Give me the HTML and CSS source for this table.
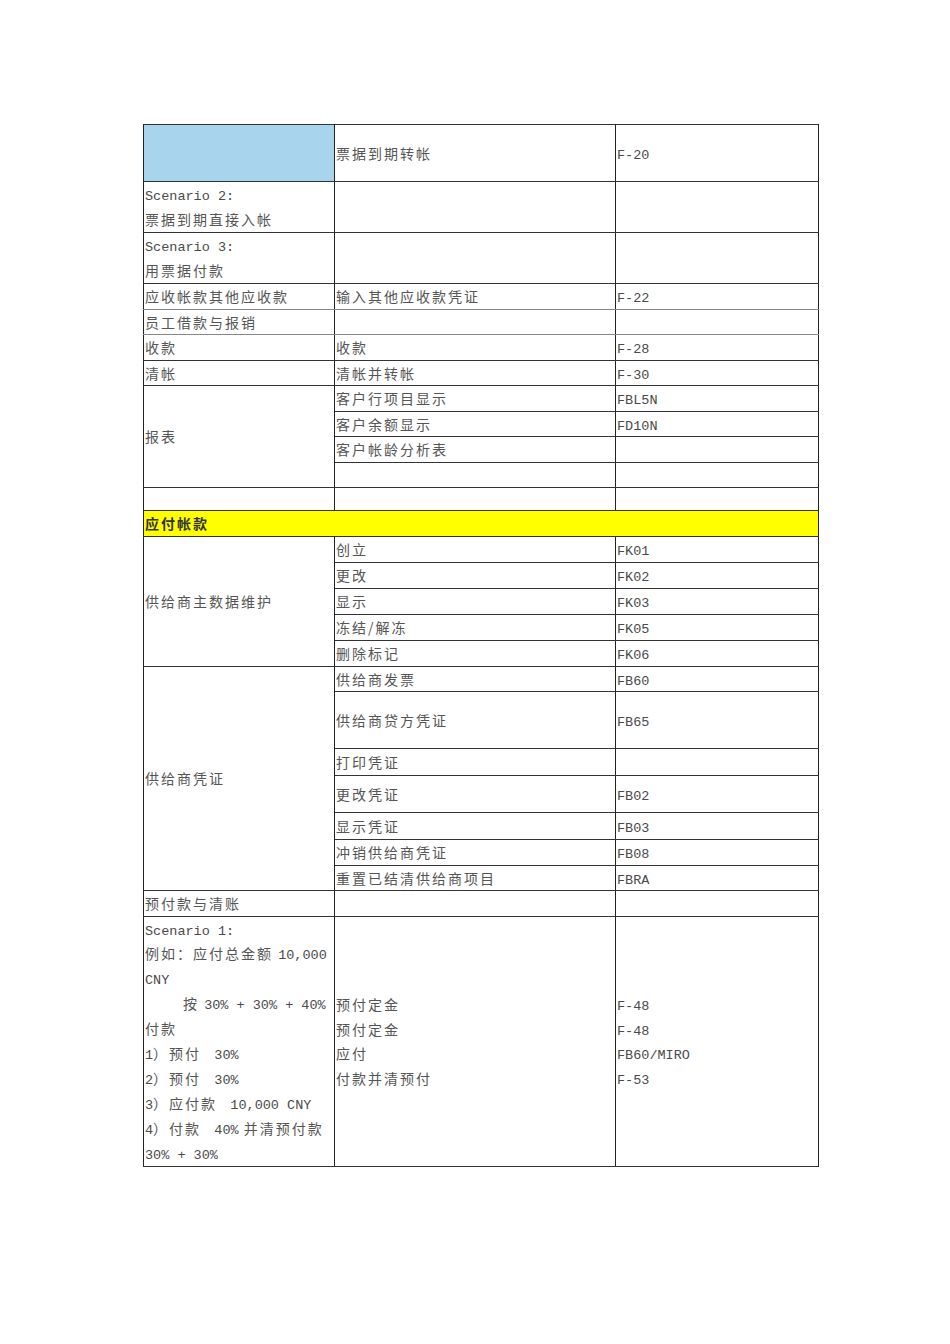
FILE: index.html
```html
<!DOCTYPE html>
<html lang="zh-CN">
<head>
<meta charset="utf-8">
<title>SAP FI 事务代码</title>
<link rel="stylesheet" href="styles.css">
</head>
<body>
<div class="page">
<table class="sheet">
<colgroup>
<col class="c1"><col class="c2"><col class="c3">
</colgroup>
<tbody>
<tr class="h58"><td class="blue"></td><td>票据到期转帐</td><td><span class="en">F-20</span></td></tr>
<tr class="two"><td><span class="en">Scenario 2:</span><br>票据到期直接入帐</td><td></td><td></td></tr>
<tr class="two"><td><span class="en">Scenario 3:</span><br>用票据付款</td><td></td><td></td></tr>
<tr class="gray"><td>应收帐款其他应收款</td><td>输入其他应收款凭证</td><td><span class="en">F-22</span></td></tr>
<tr class="gray"><td>员工借款与报销</td><td></td><td></td></tr>
<tr><td>收款</td><td>收款</td><td><span class="en">F-28</span></td></tr>
<tr><td>清帐</td><td>清帐并转帐</td><td><span class="en">F-30</span></td></tr>
<tr><td rowspan="4">报表</td><td>客户行项目显示</td><td><span class="en">FBL5N</span></td></tr>
<tr><td>客户余额显示</td><td><span class="en">FD10N</span></td></tr>
<tr><td>客户帐龄分析表</td><td></td></tr>
<tr><td></td><td></td></tr>
<tr class="h23"><td></td><td></td><td></td></tr>
<tr><td class="yellow" colspan="3"><strong>应付帐款</strong></td></tr>
<tr class="h26"><td rowspan="5">供给商主数据维护</td><td>创立</td><td><span class="en">FK01</span></td></tr>
<tr class="h26"><td>更改</td><td><span class="en">FK02</span></td></tr>
<tr class="h26"><td>显示</td><td><span class="en">FK03</span></td></tr>
<tr class="h26"><td>冻结/解冻</td><td><span class="en">FK05</span></td></tr>
<tr class="h26"><td>删除标记</td><td><span class="en">FK06</span></td></tr>
<tr><td rowspan="7">供给商凭证</td><td>供给商发票</td><td><span class="en">FB60</span></td></tr>
<tr class="h57"><td>供给商贷方凭证</td><td><span class="en">FB65</span></td></tr>
<tr class="h27"><td>打印凭证</td><td></td></tr>
<tr class="h37"><td>更改凭证</td><td><span class="en">FB02</span></td></tr>
<tr class="h27"><td>显示凭证</td><td><span class="en">FB03</span></td></tr>
<tr><td>冲销供给商凭证</td><td><span class="en">FB08</span></td></tr>
<tr><td>重置已结清供给商项目</td><td><span class="en">FBRA</span></td></tr>
<tr><td>预付款与清账</td><td></td><td></td></tr>
<tr><td class="multi"><span class="en">Scenario 1:</span><br>例如：应付总金额 <span class="en">10,000</span><br><span class="en">CNY</span><br><span class="indent">按</span> <span class="en">30% + 30% + 40%</span><br>付款<br><span class="en">1</span>）预付 <span class="en">&nbsp;30%</span><br><span class="en">2</span>）预付 <span class="en">&nbsp;30%</span><br><span class="en">3</span>）应付款 <span class="en">&nbsp;10,000 CNY</span><br><span class="en">4</span>）付款 <span class="en">&nbsp;40%</span> 并清预付款<br><span class="en">30% + 30%</span></td><td>预付定金<br>预付定金<br>应付<br>付款并清预付</td><td><span class="en">F-48</span><br><span class="en">F-48</span><br><span class="en">FB60/MIRO</span><br><span class="en">F-53</span></td></tr>
</tbody>
</table>
</div>
</body>
</html>
```

FILE: styles.css
```css
html, body {
  margin: 0;
  padding: 0;
  background: #ffffff;
}

.page {
  padding: 124px 0 0 143px;
  width: 950px;
  box-sizing: border-box;
}

.sheet {
  border-collapse: collapse;
  table-layout: fixed;
  width: 675px;
  font-family: "Noto Sans CJK SC", "Liberation Mono", sans-serif;
  font-size: 14px;
  letter-spacing: 2px;
  color: #555555;
}

.c1 { width: 191px; }
.c2 { width: 281px; }
.c3 { width: 203px; }

.sheet td {
  border-left: 1px solid #222222;
  border-right: 1px solid #222222;
  border-top: 1px solid #333333;
  border-bottom: 1px solid #333333;
  padding: 0 1px;
  line-height: 24.5px;
  height: 24.5px;
  vertical-align: middle;
  white-space: nowrap;
  overflow: hidden;
}

.sheet tr.gray td {
  border-bottom-color: #888888;
}

.sheet tr.h58 td { height: 56px; }
.sheet tr.two td { height: 50px; line-height: 25px; }
.sheet tr.h23 td { height: 22px; }
.sheet tr.h26 td { height: 25px; }
.sheet tr.h57 td { height: 56px; }
.sheet tr.h27 td { height: 26px; }
.sheet tr.h37 td { height: 36px; }

.en {
  font-family: "Liberation Mono", monospace;
  font-size: 13.5px;
  line-height: 1;
  letter-spacing: 0;
  color: #4a4a4a;
}

.blue {
  background: #a9d4ee;
}

.yellow {
  background: #ffff00;
  color: #333333;
}

.yellow strong {
  font-weight: 700;
}

.sheet td.multi {
  line-height: 24.9px;
}

.indent {
  padding-left: 38px;
}
```
